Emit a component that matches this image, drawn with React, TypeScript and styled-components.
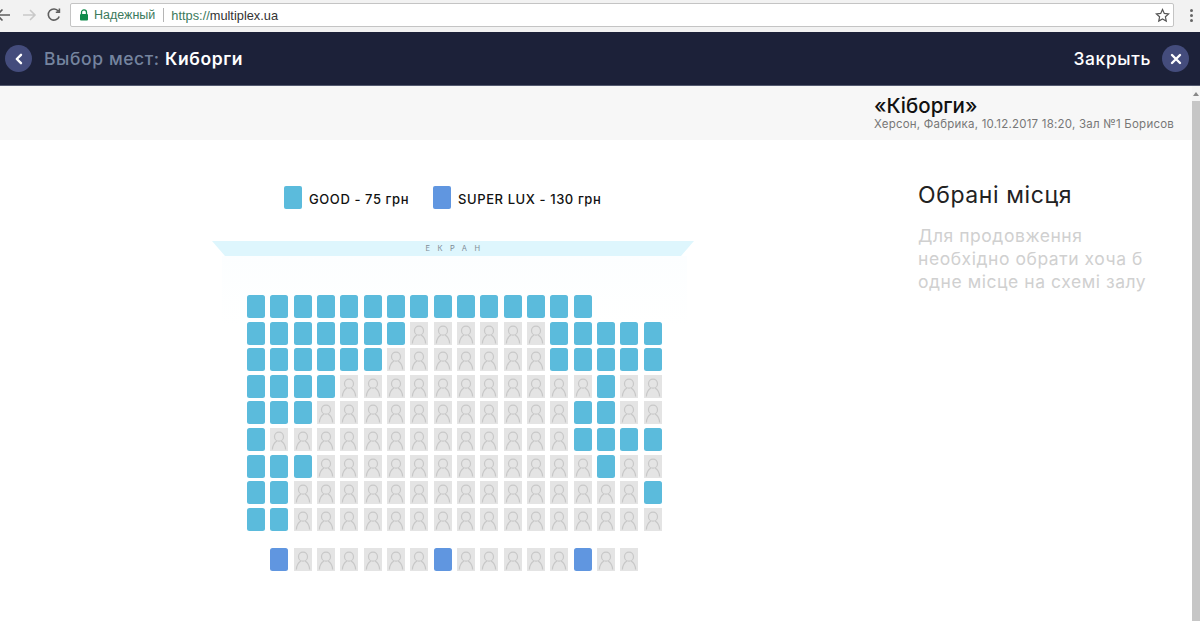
import styled, { createGlobalStyle } from "styled-components";

const GlobalStyle = createGlobalStyle`
  html, body {
    margin: 0;
    padding: 0;
    height: 621px;
    overflow: hidden;
    background: #fff;
    font-family: Inter, "Noto Sans", sans-serif;
  }
`;

type SeatKind = "good" | "lux" | "busy" | "none";

// g = good, l = super lux, b = busy, . = no seat
const rows = [
  "ggggggggggggggg...",
  "gggggggbbbbbbggggg",
  "ggggggbbbbbbbggggg",
  "ggggbbbbbbbbbbbgbb",
  "gggbbbbbbbbbbbggbb",
  "gbbbbbbbbbbbbbgggg",
  "gggbbbbbbbbbbbbgbb",
  "ggbbbbbbbbbbbbbbbg",
  "ggbbbbbbbbbbbbbbbb",
];
const luxRow = ".lbbbbbblbbbbblbb.";

const kinds: Record<string, SeatKind> = {
  g: "good",
  l: "lux",
  b: "busy",
  ".": "none",
};

const seatColors: Record<SeatKind, string> = {
  good: "#5bbbdc",
  lux: "#6096e0",
  busy: "#e4e4e4",
  none: "transparent",
};

function Person() {
  return (
    <PersonIcon viewBox="0 0 18 23" fill="none" stroke="#c8c8c8" strokeWidth="1.2">
      <circle cx="9" cy="8.700" r="4.500" />
      <path d="M2.400 21.500c.2-4.500 2.400-7.200 4.500-8.500M15.600 21.500c-.2-4.500-2.400-7.200-4.500-8.500" />
    </PersonIcon>
  );
}

function SeatRow({ pattern, lux }: { pattern: string; lux?: boolean }) {
  return (
    <Row $lux={lux}>
      {pattern.split("").map((c, i) => (
        <Seat key={i} $kind={kinds[c]}>
          {c === "b" && <Person />}
        </Seat>
      ))}
    </Row>
  );
}

export default function App() {
  return (
    <Page>
      <GlobalStyle />
      <BrowserBar>
        <NavIcon viewBox="0 0 16 16" stroke="#5f5f5f">
          <path d="M14 8H1M6.500 2.500 1 8l5.500 5.500" />
        </NavIcon>
        <NavIcon viewBox="0 0 16 16" stroke="#c9c9c9">
          <path d="M2 8h12M9 3l5 5-5 5" />
        </NavIcon>
        <NavIcon viewBox="0 0 16 16" stroke="#5f5f5f">
          <path d="M13.200 9.400A5.600 5.600 0 1 1 12.400 4.200M13.400 1.600v3.600H9.800" />
        </NavIcon>
        <AddressBox>
          <Lock viewBox="0 0 10 12">
            <path d="M2.500 5V3.400a2.500 2.500 0 0 1 5 0V5" fill="none" stroke="#0f8a4a" strokeWidth="1.3" />
            <rect x="1" y="5" width="8" height="6.500" rx="1" fill="#0f8a4a" />
          </Lock>
          <Secure>Надежный</Secure>
          <Divider />
          <Url>
            <span>https://</span>multiplex.ua
          </Url>
          <Star viewBox="0 0 16 16">
            <path d="M8 1.600l1.900 4.200 4.600.5-3.400 3.100.9 4.500L8 11.600l-4 2.300.9-4.500L1.500 6.300l4.600-.5z" />
          </Star>
        </AddressBox>
        <Dots>
          <i />
          <i />
          <i />
        </Dots>
      </BrowserBar>

      <Header>
        <HeaderSide>
          <RoundButton>
            <IconMark viewBox="0 0 12 12">
              <path d="M8 1.800 3.800 6 8 10.200" />
            </IconMark>
          </RoundButton>
          <Title>
            Выбор мест: <b>Киборги</b>
          </Title>
        </HeaderSide>
        <HeaderSide>
          <CloseLabel>Закрыть</CloseLabel>
          <RoundButton>
            <IconMark viewBox="0 0 12 12">
              <path d="M2 2l8 8M10 2l-8 8" />
            </IconMark>
          </RoundButton>
        </HeaderSide>
      </Header>

      <Body>
        <Content>
          <InfoBar>
            <MovieInfo>
              <MovieTitle>«Кіборги»</MovieTitle>
              <MovieMeta>Херсон, Фабрика, 10.12.2017 18:20, Зал №1 Борисов</MovieMeta>
            </MovieInfo>
          </InfoBar>
          <Main>
            <Hall>
              <Legend>
                <LegendItem>
                  <LegendSwatch $color={seatColors.good} />
                  <LegendLabel>GOOD - 75 грн</LegendLabel>
                </LegendItem>
                <LegendItem>
                  <LegendSwatch $color={seatColors.lux} />
                  <LegendLabel>SUPER LUX - 130 грн</LegendLabel>
                </LegendItem>
              </Legend>
              <Screen>ЕКРАН</Screen>
              <Seats>
                {rows.map((r, i) => (
                  <SeatRow key={i} pattern={r} />
                ))}
                <SeatRow pattern={luxRow} lux />
              </Seats>
            </Hall>
            <Selected>
              <SelectedTitle>Обрані місця</SelectedTitle>
              <SelectedHint>
                Для продовження необхідно обрати хоча б одне місце на схемі залу
              </SelectedHint>
            </Selected>
          </Main>
        </Content>
        <Scrollbar>
          <ScrollArrow />
          <ScrollThumb />
        </Scrollbar>
      </Body>
    </Page>
  );
}

const Page = styled.div`
  width: 1200px;
  height: 621px;
  display: flex;
  flex-direction: column;
  overflow: hidden;
`;

const BrowserBar = styled.div`
  height: 32px;
  flex: none;
  box-sizing: border-box;
  background: #f2f2f2;
  display: flex;
  align-items: center;
  padding: 0 0 2px;
  margin-left: -13px;
`;

const NavIcon = styled.svg`
  width: 16px;
  height: 16px;
  flex: none;
  margin-left: 9px;
  fill: none;
  stroke-width: 1.6;
`;

const AddressBox = styled.div`
  width: 1104px;
  height: 24px;
  flex: none;
  margin-left: 8px;
  box-sizing: border-box;
  background: #fff;
  border: 1px solid #c4c4c4;
  border-radius: 2px;
  display: flex;
  align-items: center;
  padding: 0 3px 0 8px;
  font-family: "Liberation Sans", Arial, sans-serif;
  font-size: 12.800px;
`;

const Lock = styled.svg`
  width: 10px;
  height: 12px;
`;

const Secure = styled.span`
  color: #3b7a5c;
  margin-left: 5px;
  font-size: 12.500px;
`;

const Divider = styled.span`
  width: 1px;
  height: 14px;
  background: #b5b5b5;
  margin: 0 7px 0 8px;
`;

const Url = styled.span`
  color: #333;
  flex: 1;
  span {
    color: #3b7a5c;
  }
`;

const Star = styled.svg`
  width: 15px;
  height: 15px;
  fill: none;
  stroke: #555;
  stroke-width: 1.3;
`;

const Dots = styled.div`
  display: flex;
  flex-direction: column;
  gap: 2px;
  margin-left: 16px;
  i {
    display: block;
    width: 3px;
    height: 3px;
    border-radius: 50%;
    background: #666;
  }
`;

const Header = styled.header`
  height: 54px;
  flex: none;
  box-sizing: border-box;
  background: #1c2139;
  border-bottom: 1px solid #545a70;
  display: flex;
  align-items: center;
  justify-content: space-between;
  padding: 0 11px 0 5px;
`;

const HeaderSide = styled.div`
  display: flex;
  align-items: center;
`;

const RoundButton = styled.span`
  width: 27px;
  height: 27px;
  border-radius: 50%;
  background: #444c7c;
  display: flex;
  align-items: center;
  justify-content: center;
`;

const IconMark = styled.svg`
  width: 12px;
  height: 12px;
  fill: none;
  stroke: #fff;
  stroke-width: 2.4;
  stroke-linecap: round;
  stroke-linejoin: round;
`;

const Title = styled.h1`
  margin: 0 0 0 12px;
  font-size: 17.500px;
  font-weight: 500;
  letter-spacing: 0.600px;
  color: #75849f;
  b {
    font-weight: 600;
    color: #fff;
  }
`;

const CloseLabel = styled.span`
  font-size: 17.500px;
  font-weight: 500;
  letter-spacing: 0.600px;
  color: #fff;
  margin-right: 11px;
`;

const Body = styled.div`
  flex: 1;
  display: flex;
  min-height: 0;
`;

const Content = styled.div`
  flex: 1;
  min-width: 0;
  display: flex;
  flex-direction: column;
`;

const InfoBar = styled.div`
  height: 54px;
  flex: none;
  background: #f7f7f7;
  box-sizing: border-box;
  padding: 9px 0 0 874px;
`;

const MovieInfo = styled.div`
  display: flex;
  flex-direction: column;
`;

const MovieTitle = styled.div`
  font-size: 20.500px;
  line-height: 22px;
  font-weight: 500;
  color: #111;
`;

const MovieMeta = styled.div`
  font-size: 11.500px;
  line-height: 15px;
  letter-spacing: 0.220px;
  color: #777;
  white-space: nowrap;
`;

const Main = styled.main`
  flex: 1;
  display: flex;
  background: #fff;
`;

const Hall = styled.section`
  width: 905px;
  flex: none;
  display: flex;
  flex-direction: column;
  align-items: flex-start;
`;

const Legend = styled.div`
  display: flex;
  gap: 24px;
  margin: 46px 0 0 284px;
`;

const LegendItem = styled.div`
  display: flex;
  align-items: center;
  gap: 7px;
`;

const LegendLabel = styled.span`
  padding-top: 2px;
  font-size: 13px;
  font-weight: 500;
  letter-spacing: 0.580px;
  color: #111;
`;

const LegendSwatch = styled.span<{ $color: string }>`
  width: 18px;
  height: 23px;
  border-radius: 2px;
  background: ${(p) => p.$color};
`;

const Screen = styled.div`
  width: 482px;
  height: 15px;
  margin: 32px 0 0 212px;
  padding-left: 7px;
  box-sizing: border-box;
  background: #def6fd;
  clip-path: polygon(0 0, 100% 0, 97.300% 100%, 2.700% 100%);
  display: flex;
  align-items: center;
  justify-content: center;
  font-size: 7.500px;
  letter-spacing: 7.500px;
  color: #7d8b96;
`;

const Seats = styled.div`
  margin-left: 222px;
  padding: 39px 25px 0;
  display: flex;
  flex-direction: column;
  gap: 3.600px;
  background: linear-gradient(to bottom, #fcfeff, #fff 70px);
`;

const Row = styled.div<{ $lux?: boolean }>`
  display: flex;
  gap: 5.330px;
  margin-top: ${(p) => (p.$lux ? "13.500px" : "0")};
`;

const Seat = styled.div<{ $kind: SeatKind }>`
  width: 18px;
  height: 23px;
  border-radius: ${(p) => (p.$kind === "busy" ? "0" : "2.500px")};
  background: ${(p) => seatColors[p.$kind]};
`;

const PersonIcon = styled.svg`
  display: block;
  width: 18px;
  height: 23px;
`;

const Selected = styled.aside`
  padding: 41px 0 0 13px;
  width: 240px;
`;

const SelectedTitle = styled.h2`
  margin: 0;
  font-size: 23px;
  line-height: 28px;
  letter-spacing: 0.600px;
  font-weight: 400;
  color: #222;
`;

const SelectedHint = styled.p`
  margin: 15px 0 0;
  font-size: 17.500px;
  line-height: 23px;
  letter-spacing: 0.550px;
  color: #d0d0d0;
`;

const Scrollbar = styled.div`
  width: 8px;
  flex: none;
  background: #f4f4f4;
  padding-top: 6px;
  display: flex;
  flex-direction: column;
  align-items: center;
`;

const ScrollArrow = styled.div`
  width: 0;
  height: 0;
  border-left: 3px solid transparent;
  border-right: 3px solid transparent;
  border-bottom: 4px solid #888;
`;

const ScrollThumb = styled.div`
  margin-top: 5px;
  width: 100%;
  flex: 1;
  background: #c6c6c6;
`;
